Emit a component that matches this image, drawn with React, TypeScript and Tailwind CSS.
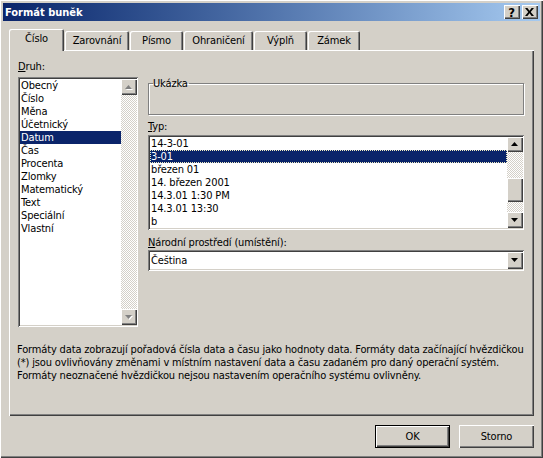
const raised =
  "bg-[#d4d0c8] shadow-[inset_1px_1px_0_#fff,inset_-1px_-1px_0_#404040,inset_-2px_-2px_0_#808080]";
const sunken =
  "bg-white shadow-[inset_1px_1px_0_#808080,inset_-1px_-1px_0_#fff,inset_2px_2px_0_#404040,inset_-2px_-2px_0_#d4d0c8]";
const checker =
  "bg-[repeating-conic-gradient(#fff_0_25%,#d4d0c8_0_50%)] bg-[length:2px_2px]";

function Arrow({ down = false, off = false }: { down?: boolean; off?: boolean }) {
  const points = down ? "0,0 7,0 3.5,4" : "3.5,0 7,4 0,4";
  return (
    <svg width="8" height="5" viewBox="0 0 8 5">
      {off && <polygon points={points} fill="#fff" transform="translate(1 1)" />}
      <polygon points={points} fill={off ? "#808080" : "#000"} />
    </svg>
  );
}

function ArrowButton({ down, off, h = "h-[16px]" }: { down?: boolean; off?: boolean; h?: string }) {
  return (
    <div className={`${raised} ${h} w-[16px] flex items-center justify-center shrink-0`}>
      <Arrow down={down} off={off} />
    </div>
  );
}

function Tab({ label, active, w }: { label: string; active?: boolean; w: string }) {
  if (active) {
    return (
      <div
        className={`${w} relative z-10 -mb-px h-[22px] rounded-t-[2px] bg-[#d4d0c8] flex items-center justify-center pb-[3px] shadow-[inset_1px_1px_0_#fff,inset_-1px_0_0_#404040,inset_-2px_0_0_#808080]`}
      >
        {label}
      </div>
    );
  }
  return (
    <div
      className={`${w} mt-[2px] h-[19px] rounded-t-[2px] bg-[#d4d0c8] flex items-center justify-center shadow-[inset_1px_1px_0_#fff,inset_-1px_0_0_#404040,inset_-2px_0_0_#808080]`}
    >
      {label}
    </div>
  );
}

const kinds = [
  "Obecný",
  "Číslo",
  "Měna",
  "Účetnický",
  "Datum",
  "Čas",
  "Procenta",
  "Zlomky",
  "Matematický",
  "Text",
  "Speciální",
  "Vlastní",
];

const types = [
  "14-3-01",
  "3-01",
  "březen 01",
  "14. březen 2001",
  "14.3.01 1:30 PM",
  "14.3.01 13:30",
  "b",
];

export default function App() {
  return (
    <div className="w-[543px] h-[458px] p-[3px] flex flex-col bg-[#d4d0c8] text-[11px] leading-[13px] tracking-[-0.15px] text-black font-['DejaVu_Sans_Condensed','DejaVu_Sans',sans-serif] shadow-[inset_1px_1px_0_#fff,inset_-1px_-1px_0_#404040,inset_-2px_-2px_0_#808080]">
      {/* Title bar */}
      <div className="h-[18px] shrink-0 flex items-center justify-between pl-[2px] pr-[2px] bg-gradient-to-r from-[#0a246a] to-[#a6caf0]">
        <span className="font-bold text-white tracking-normal">Formát buněk</span>
        <div className="flex gap-[2px]">
          <div className={`${raised} w-[16px] h-[14px] flex items-center justify-center font-bold text-[13px] pr-[1px]`}>?</div>
          <div className={`${raised} w-[16px] h-[14px] flex items-center justify-center pr-[1px]`}>
            <svg width="9" height="8" viewBox="0 0 9 8">
              <path d="M0 0h2.4l2.1 2.7L6.6 0H9L5.7 4 9 8H6.6L4.5 5.3 2.4 8H0l3.3-4z" fill="#000" />
            </svg>
          </div>
        </div>
      </div>

      <div className="flex-1 flex flex-col px-[6px] pt-[8px]">
        {/* Tabs */}
        <div className="flex h-[21px] shrink-0 gap-[1px]">
          <Tab label="Číslo" active w="w-[55px]" />
          <Tab label="Zarovnání" w="w-[64px]" />
          <Tab label="Písmo" w="w-[53px]" />
          <Tab label="Ohraničení" w="w-[69px]" />
          <Tab label="Výplň" w="w-[53px]" />
          <Tab label="Zámek" w="w-[52px]" />
        </div>

        {/* Panel */}
        <div className="h-[366px] shrink-0 pl-[9px] pr-[10px] pt-[10px] shadow-[inset_1px_1px_0_#fff,inset_-1px_-1px_0_#404040,inset_-2px_-2px_0_#808080]">
          <div className="flex gap-[10px]">
            {/* Druh */}
            <div className="w-[120px] shrink-0">
              <div className="h-[17px]">
                <span className="underline">D</span>ruh:
              </div>
              <div className={`${sunken} h-[250px] pl-[2px] py-[2px] pr-[1px] flex`}>
                <div className="flex-1 min-w-0">
                  {kinds.map((k) => (
                    <div
                      key={k}
                      className={`h-[13px] pl-[1px] ${k === "Datum" ? "bg-[#0a246a] text-white" : ""}`}
                    >
                      {k}
                    </div>
                  ))}
                </div>
                <div className={`w-[16px] flex flex-col ${checker}`}>
                  <ArrowButton off />
                  <div className="flex-1" />
                  <ArrowButton down off />
                </div>
              </div>
            </div>

            {/* Right side */}
            <div className="w-[376px] shrink-0 pt-[17px]">
              <fieldset className="h-[38px] border border-[#808080] shadow-[1px_1px_0_#fff,inset_1px_1px_0_#fff]">
                <legend className="ml-[4px] pr-[1px] leading-[13px]">Ukázka</legend>
              </fieldset>

              <div className="mt-[5px] h-[15px]">
                <span className="underline">T</span>yp:
              </div>
              <div className={`${sunken} h-[95px] pl-[2px] py-[2px] pr-[1px] flex`}>
                <div className="flex-1 min-w-0">
                  {types.map((t) => (
                    <div
                      key={t}
                      className={`h-[13px] pl-[1px] ${
                        t === "3-01"
                          ? "bg-[#0a246a] text-white outline-1 outline-dotted -outline-offset-1 outline-[#f0ecc0]"
                          : ""
                      }`}
                    >
                      {t}
                    </div>
                  ))}
                </div>
                <div className={`w-[16px] flex flex-col ${checker}`}>
                  <ArrowButton h="h-[15px]" />
                  <div className="h-[26px]" />
                  <div className={`${raised} h-[24px] w-[16px]`} />
                  <div className="flex-1" />
                  <ArrowButton down />
                </div>
              </div>

              <div className="mt-[6px] h-[14px]">
                <span className="underline">N</span>árodní prostředí (umístění):
              </div>
              <div className={`${sunken} h-[21px] pl-[2px] py-[2px] pr-[1px] flex items-center`}>
                <div className="flex-1 pl-[1px]">Čeština</div>
                <ArrowButton down h="h-[17px]" />
              </div>
            </div>
          </div>

          <p className="mt-[16px] -ml-[1px] whitespace-nowrap">
            Formáty data zobrazují pořadová čísla data a času jako hodnoty data. Formáty data začínající hvězdičkou
            <br />
            (*) jsou ovlivňovány změnami v místním nastavení data a času zadaném pro daný operační systém.
            <br />
            Formáty neoznačené hvězdičkou nejsou nastavením operačního systému ovlivněny.
          </p>
        </div>

        {/* Buttons */}
        <div className="mt-[9px] flex justify-end gap-[9px]">
          <button className="w-[75px] h-[23px] flex items-center justify-center bg-[#d4d0c8] border border-black shadow-[inset_1px_1px_0_#fff,inset_-1px_-1px_0_#404040,inset_-2px_-2px_0_#808080]">
            OK
          </button>
          <button className="w-[75px] h-[23px] flex items-center justify-center bg-[#d4d0c8] shadow-[inset_1px_1px_0_#fff,inset_-1px_-1px_0_#404040,inset_-2px_-2px_0_#808080]">
            Storno
          </button>
        </div>
      </div>
    </div>
  );
}
